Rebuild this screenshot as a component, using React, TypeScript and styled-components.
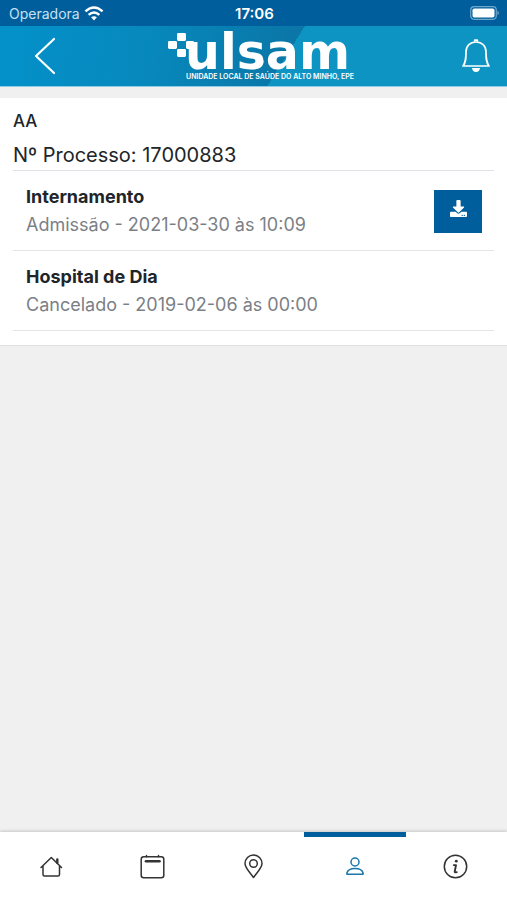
import React from "react";
import styled, { createGlobalStyle } from "styled-components";
import { FaDownload } from "react-icons/fa";

const GlobalStyle = createGlobalStyle`
  * { box-sizing: border-box; }
  body { margin: 0; background: #f0f0f0; font-family: Inter, "Liberation Sans", sans-serif; color: #212529; }
  button { font: inherit; }
  h1, h2, p, ul { margin: 0; padding: 0; }
`;

const Page = styled.div`
  display: flex;
  flex-direction: column;
  min-height: 100vh;
`;

const StatusBar = styled.div`
  display: grid;
  grid-template-columns: 1fr auto 1fr;
  align-items: center;
  height: 26px;
  padding: 0 7px 0 9px;
  background: #005e9c;
  color: #fff;
  font-size: 15px;
`;

const Carrier = styled.div`
  display: flex;
  align-items: center;
  gap: 4px;
  color: #c5e2f4;
  font-size: 14px;
`;

const Clock = styled.time`
  font-weight: 600;
`;

const Battery = styled.svg`
  justify-self: end;
`;

const Header = styled.header`
  display: grid;
  grid-template-columns: 1fr auto 1fr;
  align-items: center;
  height: 61px;
  padding: 0 16px 0 30px;
  border-bottom: 1px solid #8fcbe3;
  background:
    linear-gradient(122deg, transparent 0 56%, #0d94c2 56% 100%),
    linear-gradient(100deg, #0391ca 0%, #0789bd 28%, #0a77a8 56%);
`;

const IconButton = styled.button<{ $end?: boolean }>`
  display: flex;
  justify-self: ${(p) => (p.$end ? "end" : "start")};
  padding: 0;
  border: 0;
  background: none;
  color: #fff;
  cursor: pointer;
`;

const Logo = styled.svg`
  display: block;
  overflow: visible;
`;

const Card = styled.main`
  margin-top: 11px;
  padding: 8px 13px 14px;
  border-bottom: 1px solid #dfdfdf;
  background: #fff;
`;

const Patient = styled.h1`
  font-size: 17px;
  font-weight: 500;
  line-height: 30px;
`;

const Process = styled.p`
  padding-top: 4px;
  border-bottom: 1px solid #dee2e6;
  font-size: 20px;
  line-height: 30px;
`;

const Episodes = styled.ul`
  list-style: none;
`;

const Episode = styled.li`
  display: flex;
  align-items: center;
  justify-content: space-between;
  padding: 12px 12px 11px 13px;
  border-bottom: 1px solid #e3e4e5;
  line-height: 28px;
`;

const EpisodeTitle = styled.h2`
  font-size: 18px;
  font-weight: 700;
  line-height: 28px;
`;

const EpisodeDetail = styled.p`
  color: #7b8086;
  font-size: 18px;
`;

const DownloadButton = styled.button`
  display: flex;
  align-items: center;
  justify-content: center;
  width: 48px;
  height: 43px;
  padding: 0 0 5px;
  border: 0;
  background: #005e9c;
  color: #fff;
  cursor: pointer;
`;

const TabBar = styled.nav`
  display: grid;
  grid-template-columns: repeat(5, 1fr);
  height: 68px;
  margin-top: auto;
  background: #fff;
  box-shadow: 0 -1px 3px rgba(0, 0, 0, 0.18);
`;

const Tab = styled.a<{ $active?: boolean }>`
  display: flex;
  align-items: center;
  justify-content: center;
  padding-bottom: 4px;
  border-top: 5px solid ${(p) => (p.$active ? "#005e9c" : "transparent")};
  color: ${(p) => (p.$active ? "#1976ae" : "#333")};
`;

const episodes = [
  { title: "Internamento", detail: "Admissão - 2021-03-30 às 10:09", file: true },
  { title: "Hospital de Dia", detail: "Cancelado - 2019-02-06 às 00:00", file: false },
];

const tabs = [
  {
    label: "Início",
    drawing: (
      <>
        <path d="M4 14.5 L14.3 4.5 L24.5 14.5 M6 12.7 V21.5 Q6 23 7.5 23 H21 Q22.5 23 22.5 21.5 V12.7" />
        <path d="M20.3 6.5 V9.8" strokeWidth="2.4" />
      </>
    ),
  },
  {
    label: "Agenda",
    drawing: (
      <>
        <rect x="3.2" y="3.7" width="22.6" height="21" rx="2.5" />
        <path d="M8.5 2.6 V3.7 M20.5 2.6 V3.7" />
        <path d="M8 8.3 H21.5" strokeWidth="2.6" />
      </>
    ),
  },
  {
    label: "Localização",
    drawing: (
      <>
        <path d="M14.5 24.5 C11.5 20 6 15 6 10.5 A8.5 8.5 0 0 1 23 10.5 C23 15 17.5 20 14.5 24.5 Z" />
        <circle cx="14.5" cy="10.5" r="3.8" />
      </>
    ),
  },
  {
    label: "Perfil",
    active: true,
    drawing: (
      <>
        <circle cx="14" cy="9" r="4" />
        <path d="M6.2 21.3 Q5.8 21.3 5.8 20.5 C6.5 17 10 15.6 14 15.6 S21.5 17 22.2 20.5 Q22.2 21.3 21.8 21.3 Z" />
      </>
    ),
  },
  {
    label: "Informações",
    drawing: (
      <>
        <circle cx="13.5" cy="13.5" r="11.2" />
        <circle cx="14.3" cy="8.2" r="1.4" fill="currentColor" stroke="none" />
        <path d="M11.8 12.1 H14 L12.7 18.7 Q12.7 19.7 14.8 19.1" strokeWidth="1.9" />
      </>
    ),
  },
];

export default function App() {
  return (
    <>
      <GlobalStyle />
      <Page>
        <StatusBar>
          <Carrier>
            Operadora
            <svg width="20" height="15" viewBox="0 0 18 14" fill="none" stroke="#fff" strokeWidth="2.3" aria-hidden="true">
              <path d="M1 5 Q9 -2.2 17 5" />
              <path d="M4 8.3 Q9 3.8 14 8.3" />
              <path d="M6.3 10.6 Q9 8.3 11.7 10.6 L9 13.5 Z" fill="#fff" stroke="none" />
            </svg>
          </Carrier>
          <Clock>17:06</Clock>
          <Battery width="30" height="14" viewBox="0 0 30 14" aria-hidden="true">
            <rect x="0.7" y="0.7" width="25.6" height="12.6" rx="3.5" fill="none" stroke="#6fa6cc" strokeWidth="1.2" />
            <rect x="2.5" y="2.5" width="22" height="9" rx="1.8" fill="#fff" />
            <path d="M27.5 4.8 Q30.5 7 27.5 9.2 Z" fill="#6fa6cc" />
          </Battery>
        </StatusBar>

        <Header>
          <IconButton type="button" aria-label="Voltar">
            <svg width="30" height="40" viewBox="0 0 30 40" fill="none" stroke="currentColor" strokeWidth="2.2" strokeLinecap="round" strokeLinejoin="round">
              <path d="M24 3 L6 20 L24 37" />
            </svg>
          </IconButton>
          <Logo width="186" height="50" viewBox="0 0 186 50" fill="#fff" role="img" aria-label="ulsam">
            <rect x="9" y="2" width="9" height="8" rx="1.4" />
            <rect x="0" y="10" width="9" height="8" rx="1.4" />
            <rect x="18" y="10" width="8" height="8" rx="1.4" />
            <rect x="9" y="18" width="9" height="8" rx="1.4" />
            <text x="17" y="38" fontFamily="'DejaVu Sans', sans-serif" fontWeight="700" fontSize="49">ulsam</text>
            <text x="18" y="48" fontFamily="Inter, sans-serif" fontWeight="600" fontSize="7">UNIDADE LOCAL DE SAÚDE DO ALTO MINHO, EPE</text>
          </Logo>
          <IconButton type="button" aria-label="Notificações" $end>
            <svg width="30" height="36" viewBox="0 0 30 36" fill="none" stroke="currentColor" strokeWidth="1.7" strokeLinejoin="round">
              <path d="M2 28 C5 24 5 20 5 14 C5 8 9 4 15 4 C21 4 25 8 25 14 C25 20 25 24 28 28 Z" />
              <path d="M13.7 3.6 V2.2 H16.3 V3.6" />
              <path d="M11 30 H19 Q18.5 34 15 34 T11 30 Z" fill="currentColor" stroke="none" />
            </svg>
          </IconButton>
        </Header>

        <Card>
          <Patient>AA</Patient>
          <Process>Nº Processo: 17000883</Process>
          <Episodes>
            {episodes.map((e) => (
              <Episode key={e.title}>
                <div>
                  <EpisodeTitle>{e.title}</EpisodeTitle>
                  <EpisodeDetail>{e.detail}</EpisodeDetail>
                </div>
                {e.file && (
                  <DownloadButton type="button" aria-label="Descarregar">
                    <FaDownload size={17} />
                  </DownloadButton>
                )}
              </Episode>
            ))}
          </Episodes>
        </Card>

        <TabBar>
          {tabs.map((t) => (
            <Tab key={t.label} href="#" aria-label={t.label} $active={t.active} aria-current={t.active ? "page" : undefined}>
              <svg width="28" height="28" viewBox="0 0 28 28" fill="none" stroke="currentColor" strokeWidth="1.5" strokeLinejoin="round" strokeLinecap="round">
                {t.drawing}
              </svg>
            </Tab>
          ))}
        </TabBar>
      </Page>
    </>
  );
}
